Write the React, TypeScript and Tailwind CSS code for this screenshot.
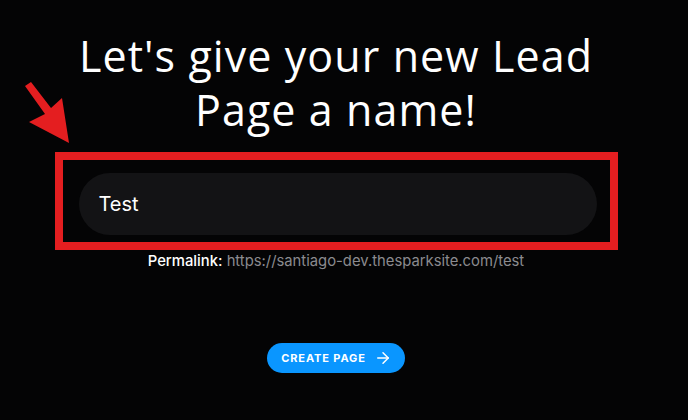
import { ArrowRight } from 'lucide-react'

function PointerArrow() {
  return (
    <svg
      className="absolute left-[22px] top-[78px]"
      width="52"
      height="70"
      viewBox="0 0 52 70"
    >
      <polygon points="3,8 9,4 29,30 40,20 47,65 7,44 23,36" fill="#e41e20" />
    </svg>
  )
}

export default function App() {
  return (
    <div className="relative h-[420px] w-[688px] overflow-hidden bg-[#040405] font-['Inter',sans-serif]">
      <PointerArrow />
      <div className="flex w-[672px] flex-col items-center pt-[29px]">
        <h1 className="text-center font-['Open_Sans',sans-serif] text-[43px] font-medium leading-[54px] tracking-[0.025em] text-white">
          Let's give your new Lead
          <br />
          Page a name!
        </h1>
        <div className="mt-[15px] w-[563px] border-8 border-[#e41e20] pb-[7px] pl-[16px] pr-[13px] pt-[13px]">
          <div className="flex h-[62px] items-center rounded-full bg-[#131315] px-[20px] text-[20px] text-white">
            Test
          </div>
        </div>
        <p className="mt-[1px] text-[14.8px] leading-[20px] text-[#8b8b8f]">
          <span className="font-medium text-white">Permalink:</span>{' '}
          https://santiago-dev.thesparksite.com/test
        </p>
        <button className="mt-[72px] flex h-[30px] items-center gap-[8px] rounded-full bg-[#0a96ff] pl-[14px] pr-[13px] text-[11px] font-bold tracking-[0.08em] text-white">
          CREATE PAGE
          <ArrowRight className="h-[18px] w-[18px]" strokeWidth={2} />
        </button>
      </div>
    </div>
  )
}
